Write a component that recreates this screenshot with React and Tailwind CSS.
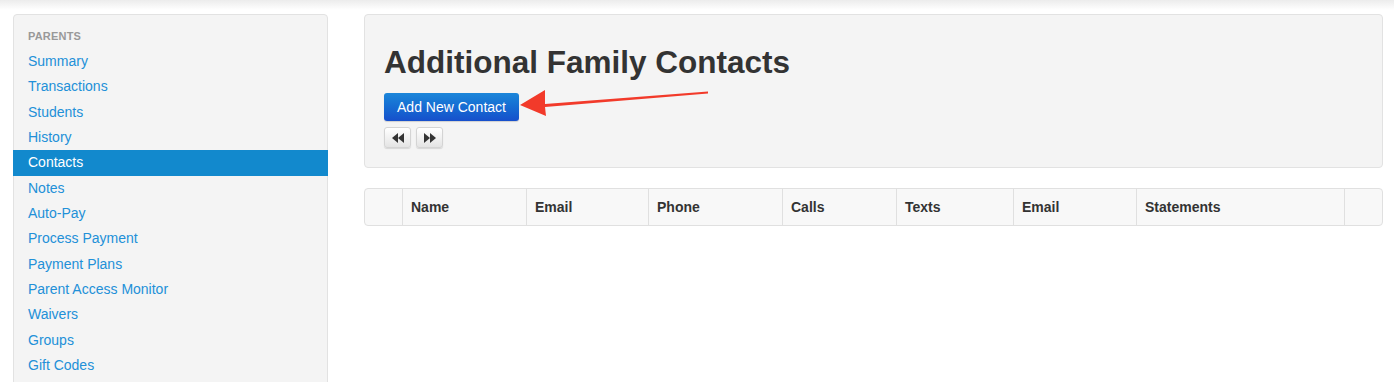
import React from "react";

const items = [
  "Summary",
  "Transactions",
  "Students",
  "History",
  "Contacts",
  "Notes",
  "Auto-Pay",
  "Process Payment",
  "Payment Plans",
  "Parent Access Monitor",
  "Waivers",
  "Groups",
  "Gift Codes",
];

const cols = ["", "Name", "Email", "Phone", "Calls", "Texts", "Email", "Statements", ""];

function Back() {
  return (
    <svg width="12" height="10" viewBox="0 0 12 10">
      <path d="M6 0 L0 5 L6 10 Z" fill="#333" />
      <path d="M12 0 L6 5 L12 10 Z" fill="#333" />
    </svg>
  );
}
function Fwd() {
  return (
    <svg width="12" height="10" viewBox="0 0 12 10">
      <path d="M0 0 L6 5 L0 10 Z" fill="#333" />
      <path d="M6 0 L12 5 L6 10 Z" fill="#333" />
    </svg>
  );
}

export default function App() {
  return (
    <div
      className="relative w-[1394px] h-[382px] overflow-hidden bg-white"
      style={{ fontFamily: '"Liberation Sans", Arial, sans-serif' }}
    >
      <div className="h-[10px] bg-gradient-to-b from-[#ececec] to-white" />
      <div className="flex pt-[4px] pl-[13px] pr-[11px] gap-[36px]">
        {/* Sidebar */}
        <div className="w-[315px] shrink-0 h-[400px] bg-[#f4f4f4] border border-[#e2e2e2] rounded-[4px] pt-[9px]">
          <div className="h-[25px] flex items-center pl-[14px] text-[11px] font-bold text-[#999] tracking-[0.2px]">
            PARENTS
          </div>
          {items.map((it) => (
            <div
              key={it}
              className={
                it === "Contacts"
                  ? "h-[25.33px] flex items-center pl-[15px] -mx-px text-[14px] text-white bg-[#1289cd]"
                  : "h-[25.33px] flex items-center pl-[14px] text-[14px] text-[#2290d8]"
              }
            >
              {it}
            </div>
          ))}
        </div>

        {/* Main */}
        <div className="flex-1 min-w-0">
          <div className="bg-[#f4f4f4] border border-[#e2e2e2] rounded-[4px] pl-[19px] pt-[27px] pb-[19px]">
            <h1 className="text-[31.5px] leading-[40px] font-bold text-[#333]">
              Additional Family Contacts
            </h1>
            <button className="mt-[11px] h-[28px] w-[135px] rounded-[3px] bg-gradient-to-b from-[#1c86d9] to-[#174fcb] text-white text-[14px] flex items-center justify-center shadow-[0_1px_1px_rgba(0,0,0,0.15)]">
              Add New Contact
            </button>
            <div className="mt-[6px] flex gap-[5px]">
              <div className="w-[27px] h-[21px] rounded-[3px] border border-[#d4d4d4] bg-gradient-to-b from-white to-[#e4e4e4] shadow-[0_1px_1px_rgba(0,0,0,0.12)] flex items-center justify-center">
                <Back />
              </div>
              <div className="w-[27px] h-[21px] rounded-[3px] border border-[#d4d4d4] bg-gradient-to-b from-white to-[#e4e4e4] shadow-[0_1px_1px_rgba(0,0,0,0.12)] flex items-center justify-center">
                <Fwd />
              </div>
            </div>
          </div>

          <div className="mt-[20px] h-[38px] border border-[#e0e0e0] rounded-[4px] bg-[#f8f8f8] grid grid-cols-[37px_124px_122px_134px_114px_117px_123px_208px_1fr]">
            {cols.map((c, i) => (
              <div
                key={i}
                className={
                  (i > 0 ? "border-l border-[#e0e0e0] " : "") +
                  "flex items-center pl-[8px] text-[14px] font-bold text-[#333]"
                }
              >
                {c}
              </div>
            ))}
          </div>
        </div>
      </div>

      {/* Annotation arrow */}
      <svg
        className="absolute left-0 top-0 pointer-events-none"
        width="1394"
        height="382"
      >
        <path d="M708 91.5 L708 93.5 L545 107 L546 116 L520 105 L545 90 L545 104 Z" fill="#f23a2a" />
      </svg>
    </div>
  );
}
